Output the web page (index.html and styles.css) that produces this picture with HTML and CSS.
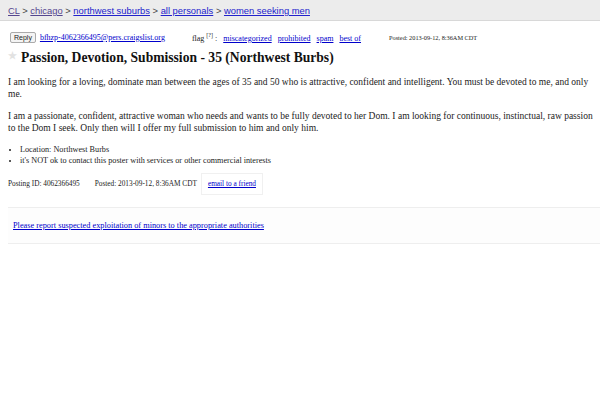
FILE: index.html
```html
<!DOCTYPE html>
<html lang="en">

<head>
  <meta charset="UTF-8">
  <meta name="viewport" content="width=device-width, initial-scale=1.0">
  <title>Passion, Devotion, Submission - 35 (Northwest Burbs)</title>
  <link rel="stylesheet" href="styles.css">
</head>

<body>
  <header class="bchead">
    <a href="#" class="visited">CL</a> &gt;
    <a href="#" class="visited">chicago</a> &gt;
    <a href="#">northwest suburbs</a> &gt;
    <a href="#">all personals</a> &gt;
    <a href="#">women seeking men</a>
  </header>

  <div class="content">
    <div class="dateReplyBar">
      <button class="reply">Reply</button>
      <a href="#" class="replyEmail">bfhzp-4062366495@pers.craigslist.org</a>
      <span class="flags">flag <sup>[?]</sup> :
        <a href="#">miscategorized</a>
        <a href="#">prohibited</a>
        <a href="#">spam</a>
        <a href="#">best of</a>
      </span>
      <span class="postedTop">Posted: 2013-09-12, 8:36AM CDT</span>
    </div>

    <h2 class="postingtitle"><span class="star">&#9733;</span>Passion, Devotion, Submission - 35 (Northwest Burbs)</h2>

    <section class="userbody">
      <p>I am looking for a loving, dominate man between the ages of 35 and 50 who is attractive, confident and intelligent. You must be devoted to me, and only me.</p>
      <p>I am a passionate, confident, attractive woman who needs and wants to be fully devoted to her Dom. I am looking for continuous, instinctual, raw passion to the Dom I seek. Only then will I offer my full submission to him and only him.</p>

      <ul class="blurbs">
        <li>Location: Northwest Burbs</li>
        <li>it's NOT ok to contact this poster with services or other commercial interests</li>
      </ul>

      <div class="postinginfos">
        <span>Posting ID: 4062366495</span>
        <span>Posted: 2013-09-12, 8:36AM CDT</span>
        <a href="#" class="emailFriend">email to a friend</a>
      </div>
    </section>
  </div>

  <div class="cltags">
    <a href="#">Please report suspected exploitation of minors to the appropriate authorities</a>
  </div>
</body>

</html>
```

FILE: styles.css
```css
body {
  font-family: 'Liberation Serif', 'Times New Roman', serif;
  margin: 0;
  padding: 0;
  background: #fff;
  color: #222;
}

a {
  color: #00c;
}

.bchead {
  font-family: 'Liberation Sans', Arial, sans-serif;
  font-size: 9.4px;
  color: #444;
  background: #ececec;
  border-bottom: 1px solid #d8d8d8;
  height: 20px;
  line-height: 22px;
  padding-left: 8px;
}

.bchead a {
  color: #22c;
}

.bchead a.visited {
  color: #55468f;
}

.content {
  padding: 0 3px 0 8px;
}

.dateReplyBar {
  display: flex;
  align-items: center;
  margin-top: 11px;
  font-size: 8px;
}

.reply {
  font-family: 'Liberation Sans', Arial, sans-serif;
  font-size: 7px;
  padding: 1px 3px;
  margin-left: 2px;
  background: #f4f4f4;
  border: 1px solid #aaa;
  border-radius: 2px;
  color: #222;
}

.replyEmail {
  margin-left: 4px;
}

.flags {
  margin-left: 27px;
}

.flags sup {
  font-size: 6px;
}

.flags a {
  margin-left: 4px;
}

.postedTop {
  margin-left: 28px;
  font-size: 6.3px;
}

.postingtitle {
  font-size: 13.6px;
  margin: 7px 0 0;
  color: #111;
}

.star {
  color: #e2e2e2;
  font-size: 10px;
  vertical-align: 3px;
  margin-right: 4px;
}

.userbody {
  font-size: 9.5px;
  line-height: 12px;
}

.userbody p {
  margin: 10px 0 0;
}

.blurbs {
  font-size: 8.2px;
  line-height: 11px;
  margin: 10px 0 0;
  padding-left: 12px;
}

.postinginfos {
  display: flex;
  align-items: center;
  font-size: 7.3px;
  margin-top: 7px;
}

.postinginfos span {
  margin-right: 15px;
}

.postinginfos span + span {
  margin-right: 4px;
}

.emailFriend {
  border: 1px solid #f0f0f0;
  padding: 4px 6px;
}

.cltags {
  margin: 12px 0 0 8px;
  border-top: 1px solid #eee;
  border-bottom: 1px solid #eee;
  background: #fdfdfd;
  padding: 13px 5px;
  font-size: 8.3px;
}
```
